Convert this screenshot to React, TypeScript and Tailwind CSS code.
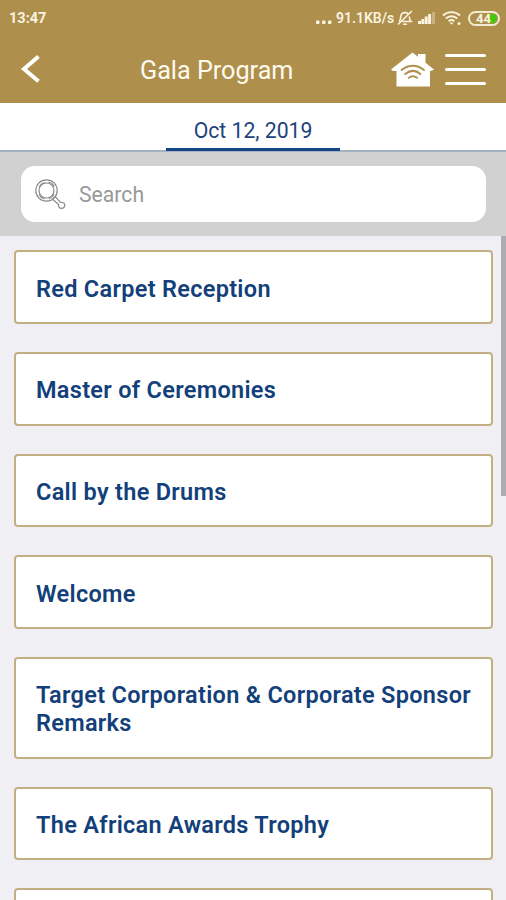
import { useState } from 'react';

const sessions = [
  { id: 1, title: 'Red Carpet Reception' },
  { id: 2, title: 'Master of Ceremonies' },
  { id: 3, title: 'Call by the Drums' },
  { id: 4, title: 'Welcome' },
  { id: 5, title: 'Target Corporation & Corporate Sponsor Remarks' },
  { id: 6, title: 'The African Awards Trophy' },
  { id: 7, title: '' },
];

function StatusBar() {
  return (
    <div className="h-9 shrink-0 flex items-center pl-[9px] pr-[6px] text-[#fbf3e2] text-[14.5px] font-bold">
      <span className="pt-[2px]">13:47</span>
      <div className="ml-auto flex items-center">
        <svg width="17" height="16" viewBox="0 0 17 16" fill="currentColor" className="mr-[3px]">
          <rect x="0" y="10.500" width="3.500" height="3.500" rx="1" />
          <rect x="6" y="10.500" width="3.500" height="3.500" rx="1" />
          <rect x="12" y="10.500" width="3.500" height="3.500" rx="1" />
        </svg>
        <span className="w-[59px] text-[14px] font-semibold whitespace-nowrap">91.1KB/s</span>
        {/* Muted bell */}
        <svg width="18" height="18" viewBox="0 0 18 18" fill="none" stroke="currentColor" strokeWidth="1.600" className="ml-[1px]">
          <path d="M3 12.500c1.500-1.300 1.500-2.700 1.700-4.700C5 5 6.800 3.600 9 3.600c1.300 0 2.300.4 3 1.100M13.300 7.500c0 2.300.3 3.700 1.700 5H6.500M7 15.200h4M15.800 2L2 15.500" />
        </svg>
        {/* Signal */}
        <svg width="18" height="14" viewBox="0 0 18 14" fill="currentColor" className="ml-[4px]">
          <rect x="0" y="10" width="3" height="3" />
          <rect x="3.300" y="8" width="3" height="5" />
          <rect x="6.700" y="5.500" width="3" height="7.500" />
          <rect x="10.100" y="3" width="3" height="10" />
          <rect x="14" y="1" width="3" height="12" opacity="0.35" />
        </svg>
        {/* Wifi */}
        <svg width="20" height="18" viewBox="0 0 20 18" fill="none" stroke="currentColor" strokeWidth="1.900" className="ml-[6px]">
          <path d="M1 6.500a12.500 12.500 0 0 1 17 0M3.800 9.500a8.300 8.300 0 0 1 11.400 0M6.600 12.300a4.500 4.500 0 0 1 5.800 0" />
          <path d="M7.500 13.500h4L9.500 15.800z" fill="currentColor" stroke="none" />
          <circle cx="17" cy="14.500" r="1.500" fill="currentColor" stroke="none" />
        </svg>
        {/* Battery */}
        <div className="relative ml-[6px] w-8 h-[15px] rounded-full border-[2px] border-[#f3ead4] overflow-hidden flex items-center justify-center">
          <span className="absolute right-[1px] top-[1px] bottom-[1px] w-[9px] rounded-r-full bg-[#43c80d]" />
          <span className="relative mr-[1px] text-[13px] leading-[11px]">44</span>
        </div>
      </div>
    </div>
  );
}

function Header() {
  return (
    <div className="h-[67px] shrink-0 flex items-center text-white">
      <button type="button" aria-label="Back" className="ml-[20px] -mt-[2px]">
        <svg width="22" height="30" viewBox="0 0 22 30" fill="none" stroke="currentColor" strokeWidth="4">
          <path d="M18.500 2.600L4 15l14.500 12.200" />
        </svg>
      </button>
      <h1 className="ml-[98px] pt-[2px] text-[25.2px] whitespace-nowrap text-[#fffaf0]">Gala Program</h1>
      <div className="ml-auto mr-[20px] flex items-center gap-[10px]">
        <svg width="45" height="36" viewBox="0 0 45 36" className="-mt-[2px]">
          <path fill="currentColor" d="M1 18.500L22.500 1.500L28 5.800V3h7.500v8.800L44 18.500l-3 1.500h-1v15.500H6.500V20H3z" />
          <g fill="none" stroke="#ae904c" strokeWidth="2" strokeLinecap="round">
            <path d="M11.500 19q11.500-8.500 22.500 0M15.200 23q7.800-6.300 15.200 0M18.800 26.800q4-3 8.200 0" />
          </g>
        </svg>
        <button type="button" aria-label="Menu" className="flex flex-col gap-[11px]">
          <span className="w-[41px] h-[3px] rounded-full bg-white" />
          <span className="w-[41px] h-[3px] rounded-full bg-white" />
          <span className="w-[41px] h-[3px] rounded-full bg-white" />
        </button>
      </div>
    </div>
  );
}

export default function App() {
  const [query, setQuery] = useState('');

  const visible = sessions.filter(s => s.title.toLowerCase().includes(query.toLowerCase()));

  return (
    <div className="w-full h-[900px] overflow-hidden flex flex-col bg-[#f0eff4] font-['Roboto',sans-serif]">
      <div className="h-[103px] shrink-0 flex flex-col bg-[#ae904c]">
        <StatusBar />
        <Header />
      </div>

      {/* Date tab */}
      <div className="h-[49px] shrink-0 flex justify-center bg-white border-b-2 border-[#a4b2c2]">
        <div className="w-[174px] h-[48px] pt-[12px] border-b-[3px] border-[#154484] text-center text-[21.2px] leading-8 text-[#1d437b]">
          Oct 12, 2019
        </div>
      </div>

      {/* Search */}
      <div className="h-[84px] shrink-0 bg-[#d1d1d1] pt-[14px] pl-[21px] pr-5">
        <label className="h-14 rounded-[14px] bg-white flex items-center pl-[13px]">
          <svg width="34" height="34" viewBox="0 0 34 34" fill="none" stroke="#8a8a8a" strokeWidth="1.200" className="mt-[2px]">
            <circle cx="12.500" cy="12.500" r="10.700" />
            <circle cx="12.500" cy="12.500" r="7.500" />
            <path d="M5 9.500q2-4 5.500-5M14.500 4q4 .8 5.500 4.500M20 16q-1.500 3.500-5 5M10.500 21q-3.500-.8-5.300-4.200M18.500 21.200l2.700-2.700 5.300 5.800c2.800-.3 4.300 1 4.300 3a3 3 0 0 1-3.200 3c-2 0-3.400-1.300-3-3.800z" />
          </svg>
          <input
            type="text"
            placeholder="Search"
            value={query}
            onChange={e => setQuery(e.target.value)}
            className="ml-[11px] pt-[2px] flex-1 text-[21.2px] text-[#555] placeholder:text-[#999] focus:outline-none"
          />
        </label>
      </div>

      {/* Program list */}
      <div className="flex-1 min-h-0 relative overflow-hidden">
        <div className="pt-[14.3px] pl-[14px] pr-[13px] flex flex-col gap-7">
          {visible.map(s => (
            <div
              key={s.id}
              className="min-h-[73.7px] pt-[22.300px] pb-[19.400px] pl-5 pr-4 bg-white border-2 border-[#c4af84] rounded-[4px] text-[23.5px] leading-[28px] font-semibold tracking-[0.3px] text-[#133f7a]"
            >
              {s.title}
            </div>
          ))}
        </div>
        <div className="absolute top-0 right-0 w-[5px] h-[260px] bg-[#acacb1]" />
      </div>
    </div>
  );
}
